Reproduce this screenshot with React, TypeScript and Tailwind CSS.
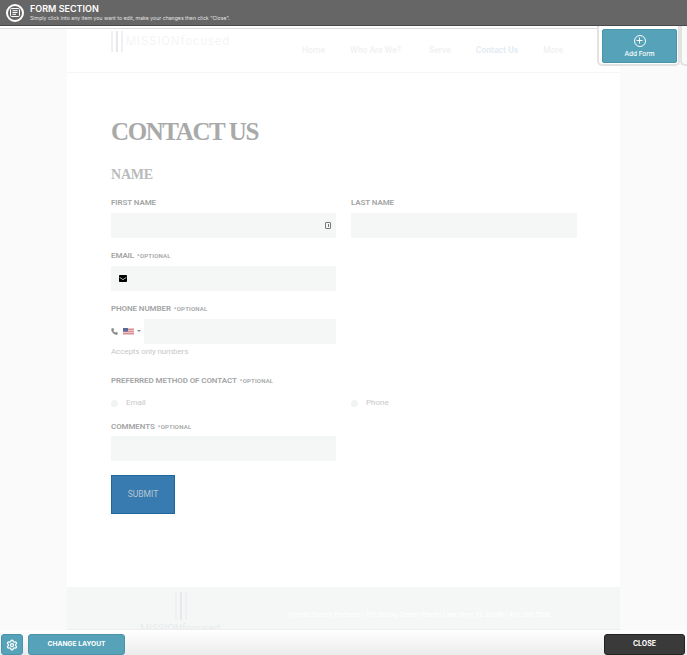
import { Phone, Plus, Settings } from "lucide-react";

const labelClass = "block text-[8px] leading-[10px] font-semibold tracking-[-0.1px] text-[#a3a5a5]";
const inputClass = "h-[24.5px] bg-[#f5f7f7]";

function Label({ text, optional }: { text: string; optional?: boolean }) {
  return (
    <span className={labelClass}>
      {text}
      {optional && <span className="ml-[3px] text-[6px] tracking-[0.2px]">*OPTIONAL</span>}
    </span>
  );
}

function Bars({ className }: { className: string }) {
  return (
    <div className={`flex gap-[3px] ${className}`}>
      <div className="w-[2px] bg-[#eef0f3]" />
      <div className="w-[2px] bg-[#e6e8ee]" />
      <div className="w-[2px] bg-[#eef0f3]" />
    </div>
  );
}

function Flag() {
  return (
    <svg width="11" height="7" viewBox="0 0 11 7">
      <rect width="11" height="7" fill="#ecc5c8" />
      <rect y="1" width="11" height="1" fill="#d98f96" />
      <rect y="3" width="11" height="1" fill="#d98f96" />
      <rect y="5" width="11" height="1" fill="#d98f96" />
      <rect width="5" height="3.5" fill="#5b6a9a" />
    </svg>
  );
}

function Envelope() {
  return (
    <svg width="8" height="7" viewBox="0 0 8 7">
      <rect width="8" height="7" rx="0.8" fill="#000" />
      <path d="M0.6 2.4 4 4.6l3.4-2.2" fill="none" stroke="#f5f7f7" strokeWidth="0.7" />
    </svg>
  );
}

export default function App() {
  return (
    <div className="relative flex h-[655px] w-[687px] flex-col overflow-hidden bg-[#fafafa] font-['Roboto',sans-serif]">
      <header className="flex h-[26px] shrink-0 items-center gap-[6px] border-b border-[#4a4a4a] bg-[#666666] pl-[6px] font-['Inter',sans-serif] text-white">
        <div className="flex h-[18px] w-[18px] items-center justify-center rounded-full border-2 border-white">
          <svg width="10" height="9" viewBox="0 0 10 9" fill="none" stroke="white" strokeWidth="1">
            <rect x="0.5" y="0.5" width="9" height="8" rx="1" />
            <path d="M2.5 2.7h5M2.5 4.5h5M2.5 6.3h3.5" />
          </svg>
        </div>
        <div className="pt-[1px]">
          <div className="text-[9px] leading-[10px] font-semibold">FORM SECTION</div>
          <div className="text-[5.2px] leading-[8px] text-[#e2e2e2]">
            Simply click into any item you want to edit, make your changes then click "Close".
          </div>
        </div>
      </header>

      <div className="h-[3px] shrink-0 border-b border-[#dcdcdc] bg-white" />

      <main className="mx-[67px] flex min-h-0 w-[553px] flex-1 flex-col bg-white">
        <div className="relative flex h-[44px] shrink-0 border-b border-[#f5f5f5]">
          <Bars className="absolute top-[2px] left-[44px] h-[21px]" />
          <span className="absolute top-[7px] left-[59px] font-['Inter',sans-serif] text-[11px] leading-[10px] font-light tracking-[1.2px] text-[#f1f2f4]">
            MISSIONfocused
          </span>
          <nav className="ml-[235px] flex gap-[25px] pt-[15px] text-[8.6px] leading-[12px] font-medium text-[#f0f1f2]">
            <span>Home</span>
            <span>Who Are We?</span>
            <span className="ml-[3px]">Serve</span>
            <span className="font-semibold text-[#e3ebf3]">Contact Us</span>
            <span>More</span>
          </nav>
        </div>

        <div className="flex-1 pt-[44px] pl-[44px]">
          <h1 className="font-['Liberation_Serif',serif] text-[25px] leading-[30px] font-bold tracking-[-1.4px] text-[#a8a9a9]">
            CONTACT US
          </h1>
          <h2 className="mt-[19px] font-['Liberation_Serif',serif] text-[14px] leading-[18px] font-bold tracking-[-0.2px] text-[#b9baba]">
            NAME
          </h2>

          <div className="mt-[14px] flex gap-[15px]">
            <div className="w-[225px]">
              <Label text="FIRST NAME" />
              <div className={`${inputClass} mt-[5px] flex items-center justify-end pr-[5px]`}>
                <div className="flex h-[7px] w-[6px] items-center justify-center rounded-[1px] border border-[#777]">
                  <div className="h-[3px] w-[1px] bg-[#777]" />
                </div>
              </div>
            </div>
            <div className="w-[226px]">
              <Label text="LAST NAME" />
              <div className={`${inputClass} mt-[5px]`} />
            </div>
          </div>

          <div className="mt-[13.5px] w-[225px]">
            <Label text="EMAIL" optional />
            <div className={`${inputClass} mt-[5px] flex items-center pl-[8px]`}>
              <Envelope />
            </div>
          </div>

          <div className="mt-[13.5px] w-[225px]">
            <Label text="PHONE NUMBER" optional />
            <div className="mt-[5px] flex h-[24.5px] items-center">
              <Phone size={7} className="text-[#888]" fill="#888" />
              <div className="ml-[5px]">
                <Flag />
              </div>
              <span className="ml-[3px] h-0 w-0 border-x-2 border-t-2 border-x-transparent border-t-[#888]" />
              <div className={`${inputClass} ml-[3px] flex-1`} />
            </div>
            <p className="mt-[3.5px] text-[8px] leading-[10px] tracking-[-0.1px] text-[#c8c8c8]">Accepts only numbers</p>
          </div>

          <div className="mt-[19px]">
            <Label text="PREFERRED METHOD OF CONTACT" optional />
            <div className="mt-[12px] flex h-[10px] items-center text-[8px] text-[#c8c8c8]">
              <div className="flex w-[240px] items-center gap-[8px]">
                <div className="h-[7px] w-[7px] rounded-full bg-[#f1f3f3]" />
                <span>Email</span>
              </div>
              <div className="flex items-center gap-[8px]">
                <div className="h-[7px] w-[7px] rounded-full bg-[#f1f3f3]" />
                <span>Phone</span>
              </div>
            </div>
          </div>

          <div className="mt-[14px] w-[225px]">
            <Label text="COMMENTS" optional />
            <div className={`${inputClass} mt-[4px]`} />
          </div>

          <button className="mt-[14.5px] h-[39px] w-[64px] border border-[#20689c] bg-[#377bb0] text-[8.5px] text-[#b9c6cf]">
            SUBMIT
          </button>
        </div>
      </main>

      <footer className="relative mx-[67px] h-[43px] w-[553px] shrink-0 overflow-hidden border-b border-[#eeeeee] bg-[#f5f7f7]">
        <Bars className="absolute top-[5px] left-[108px] h-[28px]" />
        <span className="absolute top-[36px] left-[73px] text-[10.5px] leading-[12px] text-[#e9ebed]">MISSIONfocused</span>
        <p className="absolute top-[24px] left-[222px] text-[6.5px] leading-[8px] tracking-[0.1px] whitespace-nowrap text-white">
          Florida Church Partners | 773 Sibling Center Place | Lake Mary, FL 32746 | 407.268.5000
        </p>
      </footer>

      <div className="flex h-[25px] shrink-0 items-start justify-between bg-gradient-to-b from-white to-[#ececec] pt-[4px] pr-[2px] pl-[1px] font-['Inter',sans-serif]">
        <div className="flex gap-[5px]">
          <div className="flex h-[21px] w-[22px] items-center justify-center rounded-[3px] border border-[#4a93ab] bg-[#56a3b9] text-white">
            <Settings size={12} strokeWidth={2.5} />
          </div>
          <div className="flex h-[21px] w-[97px] items-center justify-center rounded-[3px] border border-[#4a93ab] bg-[#56a3b9] text-[6.7px] font-bold text-white">
            CHANGE LAYOUT
          </div>
        </div>
        <div className="flex h-[21px] w-[81px] items-center justify-center rounded-[3px] border border-[#222] bg-[#3a3a3a] text-[7px] font-bold text-white">
          CLOSE
        </div>
      </div>

      <div className="absolute top-[26px] left-[597px] h-[40px] w-[83px] rounded-b-[5px] border-x-2 border-b-2 border-[#e2e2e2] bg-white pt-[3px] pl-[3px]">
        <div className="flex h-[34px] w-[75px] flex-col items-center justify-center rounded-[2px] border border-[#4a93ab] bg-[#56a3b9] font-['Inter',sans-serif] text-white">
          <div className="flex h-[12px] w-[12px] items-center justify-center rounded-full border border-white">
            <Plus size={9} strokeWidth={2.5} />
          </div>
          <span className="mt-[3px] text-[6.5px] leading-[8px] font-medium">Add Form</span>
        </div>
      </div>
      <div className="absolute top-[26px] left-[680px] h-[40px] w-[8px] rounded-bl-[5px] border-b-2 border-l-2 border-[#e2e2e2] bg-[#fafafa]" />
    </div>
  );
}
